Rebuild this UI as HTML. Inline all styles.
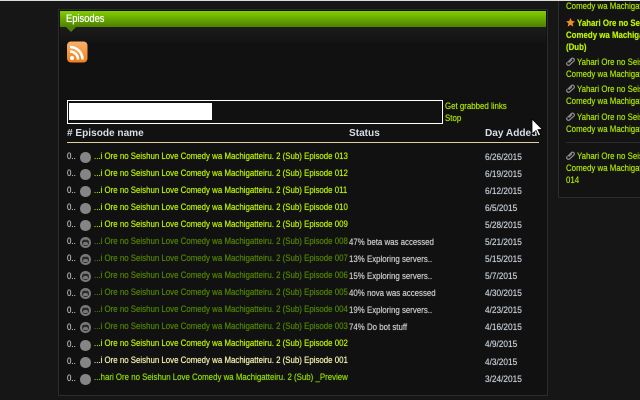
<!DOCTYPE html>
<html><head><meta charset="utf-8"><style>
html,body{margin:0;padding:0;width:640px;height:400px;overflow:hidden;background:#161616;font-family:"Liberation Sans",sans-serif;font-size:9px;color:#ccc}
div{position:absolute;white-space:nowrap}
#top{left:0;top:0;width:640px;height:1px;background:#ddd}
#panel{left:58px;top:9px;width:488px;height:385px;border:1px solid #2c2c2c;background:#111}
#head{left:60px;top:11px;width:486px;height:16px;background:linear-gradient(#82cf00,#4d8000)}
#headt{left:66px;top:12px;color:#fff;font-size:11px;line-height:14px;transform:scaleX(.85);transform-origin:0 0;text-shadow:0 0 .6px #fff}
#tri{left:66px;top:27px;width:0;height:0;border-left:5px solid transparent;border-right:5px solid transparent;border-top:5px solid #4d8000}
#band{left:60px;top:27px;width:486px;height:18px;background:linear-gradient(#1c1c1c,#111)}
#box{left:67px;top:100px;width:374px;height:22px;border:1px solid #fff}
#bar{left:69px;top:103px;width:143px;height:17px;background:#fff}
.l,.n,.t,.st,.y{transform:scaleX(.875);transform-origin:0 0;text-shadow:0 0 .6px currentColor}
.dt{text-shadow:0 0 .6px currentColor}
.l{color:#a8e000;line-height:12px}
.th{font-weight:bold;font-size:10.5px;color:#d8dde8;top:127px;line-height:13px;transform:scaleX(.96);transform-origin:0 0}
#hr{left:67px;top:142px;width:472px;height:1px;background:#e0d0a0}
.n{left:67px;color:#bbb;line-height:12px}
.c{left:80px;width:10.5px;height:10.5px;border-radius:50%;background:#858585;margin-top:1px}
.s{background:#2a2a2a;box-sizing:border-box;border:2px solid #7a7a7a}
.s::after{content:"";position:absolute;left:1px;top:3px;width:4.5px;height:3px;border-radius:2px 2px 1px 1px;background:#777}
.s::before{content:"";position:absolute;left:1px;top:0;width:4.5px;height:1px;background:#666}
.t{left:94px;color:#b8f000;line-height:12px}
.g{color:#4f8000}
.w{color:#f0f0b0}
.st{left:349px;color:#c8c8c8;line-height:12px}
.dt{left:485px;color:#c0c8d0;line-height:12px;transform:scaleX(.92);transform-origin:0 0}
#side{left:558px;top:-2px;width:90px;height:198px;border:1px solid #2c2c2c;background:#131313}
.y{left:566px;color:#a8e000;line-height:14px;font-size:9px}
.b{font-weight:bold;color:#b8f000}
svg.clip{position:absolute;left:566px}
#sep{left:566px;top:142px;width:74px;height:1px;background:#2c2c2c}
</style></head><body>
<div id="side"></div>
<div id="top"></div>
<div id="panel"></div>
<div id="band"></div>
<div id="head"></div>
<div id="headt">Episodes</div>
<div id="tri"></div>

<svg style="position:absolute;left:67px;top:41px" width="21" height="22" viewBox="0 0 21 22">
<defs><linearGradient id="o" x1="0" y1="0" x2="0" y2="1"><stop offset="0" stop-color="#f9b26a"/><stop offset="1" stop-color="#f07f1c"/></linearGradient></defs>
<rect x="0" y="0.5" width="20.500" height="21" rx="4" fill="url(#o)"/>
<circle cx="5" cy="17" r="2" fill="#fff"/>
<path d="M3 10.500a8 8 0 0 1 8 8M3 6a12.500 12.500 0 0 1 12.500 12.500" fill="none" stroke="#fff" stroke-width="2.600"/>
</svg>

<div id="box"></div><div id="bar"></div>
<div class="l" style="left:445px;top:100px">Get grabbed links</div>
<div class="l" style="left:445px;top:112px">Stop</div>

<div class="th" style="left:67px"># Episode name</div>
<div class="th" style="left:349px">Status</div>
<div class="th" style="left:485px">Day Added</div>
<div id="hr"></div>

<div class="n" style="top:150px">0..</div><div class="c" style="top:151px"></div><div class="t" style="top:150px">...i Ore no Seishun Love Comedy wa Machigatteiru. 2 (Sub) Episode 013</div><div class="dt" style="top:151px">6/26/2015</div>
<div class="n" style="top:167px">0..</div><div class="c" style="top:168px"></div><div class="t" style="top:167px">...i Ore no Seishun Love Comedy wa Machigatteiru. 2 (Sub) Episode 012</div><div class="dt" style="top:168px">6/19/2015</div>
<div class="n" style="top:184px">0..</div><div class="c" style="top:185px"></div><div class="t" style="top:184px">...i Ore no Seishun Love Comedy wa Machigatteiru. 2 (Sub) Episode 011</div><div class="dt" style="top:185px">6/12/2015</div>
<div class="n" style="top:201px">0..</div><div class="c" style="top:202px"></div><div class="t" style="top:201px">...i Ore no Seishun Love Comedy wa Machigatteiru. 2 (Sub) Episode 010</div><div class="dt" style="top:202px">6/5/2015</div>
<div class="n" style="top:218px">0..</div><div class="c" style="top:219px"></div><div class="t" style="top:218px">...i Ore no Seishun Love Comedy wa Machigatteiru. 2 (Sub) Episode 009</div><div class="dt" style="top:219px">5/28/2015</div>

<div class="n" style="top:235px">0..</div><div class="c s" style="top:236px"></div><div class="t g" style="top:235px">...i Ore no Seishun Love Comedy wa Machigatteiru. 2 (Sub) Episode 008</div><div class="st" style="top:236px">47% beta was accessed</div><div class="dt" style="top:236px">5/21/2015</div>
<div class="n" style="top:252px">0..</div><div class="c s" style="top:253px"></div><div class="t g" style="top:252px">...i Ore no Seishun Love Comedy wa Machigatteiru. 2 (Sub) Episode 007</div><div class="st" style="top:253px">13% Exploring servers..</div><div class="dt" style="top:253px">5/15/2015</div>
<div class="n" style="top:270px">0..</div><div class="c s" style="top:270px"></div><div class="t g" style="top:269px">...i Ore no Seishun Love Comedy wa Machigatteiru. 2 (Sub) Episode 006</div><div class="st" style="top:270px">15% Exploring servers..</div><div class="dt" style="top:270px">5/7/2015</div>
<div class="n" style="top:287px">0..</div><div class="c s" style="top:287px"></div><div class="t g" style="top:286px">...i Ore no Seishun Love Comedy wa Machigatteiru. 2 (Sub) Episode 005</div><div class="st" style="top:287px">40% nova was accessed</div><div class="dt" style="top:287px">4/30/2015</div>
<div class="n" style="top:304px">0..</div><div class="c s" style="top:304px"></div><div class="t g" style="top:303px">...i Ore no Seishun Love Comedy wa Machigatteiru. 2 (Sub) Episode 004</div><div class="st" style="top:304px">19% Exploring servers..</div><div class="dt" style="top:304px">4/23/2015</div>
<div class="n" style="top:321px">0..</div><div class="c s" style="top:321px"></div><div class="t g" style="top:320px">...i Ore no Seishun Love Comedy wa Machigatteiru. 2 (Sub) Episode 003</div><div class="st" style="top:321px">74% Do bot stuff</div><div class="dt" style="top:321px">4/16/2015</div>

<div class="n" style="top:338px">0..</div><div class="c" style="top:339px"></div><div class="t" style="top:337px">...i Ore no Seishun Love Comedy wa Machigatteiru. 2 (Sub) Episode 002</div><div class="dt" style="top:338px">4/9/2015</div>
<div class="n" style="top:355px">0..</div><div class="c" style="top:356px"></div><div class="t w" style="top:354px">...i Ore no Seishun Love Comedy wa Machigatteiru. 2 (Sub) Episode 001</div><div class="dt" style="top:356px">4/3/2015</div>
<div class="n" style="top:372px">0..</div><div class="c" style="top:373px"></div><div class="t" style="top:371px;color:#90d800">...hari Ore no Seishun Love Comedy wa Machigatteiru. 2 (Sub) _Preview</div><div class="dt" style="top:373px">3/24/2015</div>

<svg style="position:absolute;left:531px;top:118px" width="13" height="20" viewBox="0 0 13 20"><path d="M1 1v15l4-3.500 2.500 5.500 2-1-2.500-5.500h4.500z" fill="#fff" stroke="#000" stroke-width=".8"/></svg>

<div class="y" style="top:-1px">Comedy wa Machigatteiru</div>
<svg style="position:absolute;left:566px;top:18px" width="9" height="9" viewBox="0 0 10 10"><path d="M5 0l1.500 3.400 3.500.3-2.700 2.300.8 3.600L5 7.700 1.900 9.600l.8-3.600L0 3.700l3.500-.3z" fill="#f09020"/></svg>
<div class="y b" style="left:577px;top:16px">Yahari Ore no Seishun</div>
<div class="y b" style="top:28px">Comedy wa Machigatteiru</div>
<div class="y b" style="top:40px">(Dub)</div>
<svg class="clip" style="top:57px" width="9" height="9" viewBox="0 0 9 9"><path d="M1.500 5.500 5.500 1.500a1.800 1.800 0 0 1 2.500 2.500L3.500 8a1.800 1.800 0 0 1-2.500-2.500M3 5.500 6 2.500" fill="none" stroke="#8c8c8c" stroke-width="1.200"/></svg>
<div class="y" style="left:577px;top:55px">Yahari Ore no Seishun</div>
<div class="y" style="top:67px">Comedy wa Machigatteiru</div>
<svg class="clip" style="top:84px" width="9" height="9" viewBox="0 0 9 9"><path d="M1.500 5.500 5.500 1.500a1.800 1.800 0 0 1 2.500 2.500L3.500 8a1.800 1.800 0 0 1-2.500-2.500M3 5.500 6 2.500" fill="none" stroke="#8c8c8c" stroke-width="1.200"/></svg>
<div class="y" style="left:577px;top:82px">Yahari Ore no Seishun</div>
<div class="y" style="top:94px">Comedy wa Machigatteiru</div>
<svg class="clip" style="top:112px" width="9" height="9" viewBox="0 0 9 9"><path d="M1.500 5.500 5.500 1.500a1.800 1.800 0 0 1 2.500 2.500L3.500 8a1.800 1.800 0 0 1-2.500-2.500M3 5.500 6 2.500" fill="none" stroke="#8c8c8c" stroke-width="1.200"/></svg>
<div class="y" style="left:577px;top:110px">Yahari Ore no Seishun</div>
<div class="y" style="top:122px">Comedy wa Machigatteiru</div>
<div id="sep"></div>
<svg class="clip" style="top:151px" width="9" height="9" viewBox="0 0 9 9"><path d="M1.500 5.500 5.500 1.500a1.800 1.800 0 0 1 2.500 2.500L3.500 8a1.800 1.800 0 0 1-2.500-2.500M3 5.500 6 2.500" fill="none" stroke="#8c8c8c" stroke-width="1.200"/></svg>
<div class="y" style="left:577px;top:149px">Yahari Ore no Seishun</div>
<div class="y" style="top:161px">Comedy wa Machigatteiru</div>
<div class="y" style="top:173px">014</div>
</body></html>
